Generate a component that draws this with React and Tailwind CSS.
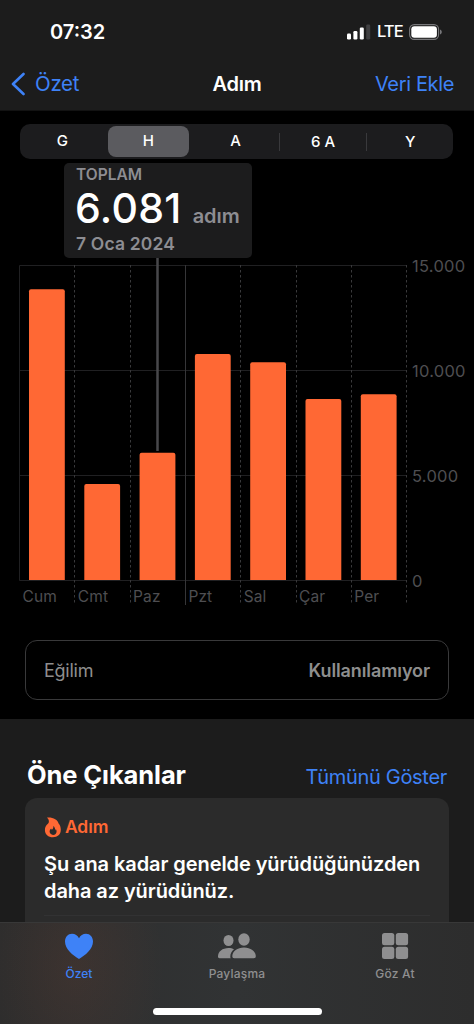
const STEPS = [
  { day: "Cum", value: 13870 },
  { day: "Cmt", value: 4590 },
  { day: "Paz", value: 6081 },
  { day: "Pzt", value: 10780 },
  { day: "Sal", value: 10390 },
  { day: "Çar", value: 8640 },
  { day: "Per", value: 8870 },
];

const TICKS = [
  { value: 0, label: "0" },
  { value: 5000, label: "5.000" },
  { value: 10000, label: "10.000" },
  { value: 15000, label: "15.000" },
];

const LEFT = 19.5;
const STEP = 55.3;
const BASE = 322.5;
const yOf = (value) => BASE - (value / 5000) * 105;

function StatusBar() {
  return (
    <div className="flex h-[58px] items-center justify-between pt-[5px] pr-[32px] pl-[50px]">
      <span className="text-[20px] font-semibold">07:32</span>
      <div className="flex items-center">
        <svg width="24" height="16" viewBox="0 0 24 16" fill="#fff">
          <rect x="0" y="9.5" width="4" height="6" rx="1.2" />
          <rect x="6.4" y="7" width="4" height="8.5" rx="1.2" />
          <rect x="12.8" y="3.5" width="4" height="12" rx="1.2" />
          <rect x="19.2" y="0.5" width="4" height="15" rx="1.2" fill="#404042" />
        </svg>
        <span className="ml-[6px] w-[25px] text-[16.5px] font-medium tracking-[-0.9px]">LTE</span>
        <svg className="ml-[7px]" width="33" height="16" viewBox="0 0 33 16" fill="none">
          <rect x="0.6" y="0.6" width="29" height="14.8" rx="4.6" stroke="#77777a" strokeWidth="1.1" />
          <rect x="2.3" y="2.3" width="25.6" height="11.4" rx="3" fill="#fff" />
          <path d="M31 5.5c1.2.4 1.8 1.4 1.8 2.5s-.6 2.1-1.8 2.5z" fill="#77777a" />
        </svg>
      </div>
    </div>
  );
}

function NavBar() {
  return (
    <div className="grid h-[52px] grid-cols-3 items-center pr-[20px] pl-[11px] text-[20.5px]">
      <a className="flex items-center text-[#3e82f7]">
        <svg width="14" height="24" viewBox="0 0 14 24" fill="none" stroke="currentColor" strokeWidth="2.6" strokeLinecap="round" strokeLinejoin="round">
          <path d="M12.5 2 2 12l10.5 10" />
        </svg>
        <span className="ml-[10px] tracking-[-0.3px]">Özet</span>
      </a>
      <h1 className="pl-[9px] text-center text-[20px] font-semibold tracking-[-0.3px]">Adım</h1>
      <a className="text-right text-[20px] tracking-[-0.35px] whitespace-nowrap text-[#3e82f7]">Veri Ekle</a>
    </div>
  );
}

function RangePicker() {
  return (
    <div className="mr-[21px] ml-5 mt-[13px] grid h-[35px] shrink-0 grid-cols-5 items-center rounded-[10px] bg-[#1c1c1e] text-center text-[15px] font-medium">
      <span className="pr-[2px]">G</span>
      <span className="mr-[4px] ml-[1px] flex h-[31px] items-center justify-center rounded-[8px] bg-[#5b5b5f]">H</span>
      <span className="pr-[2px]">A</span>
      <span className="-ml-px border-l border-[#39393c] leading-[18px]">6 A</span>
      <span className="border-l border-[#39393c] leading-[18px]">Y</span>
    </div>
  );
}

function Selection() {
  return (
    <div className="mt-1 ml-[64px] flex h-[95px] w-[188px] shrink-0 flex-col rounded-[5px] bg-[#1c1c1d] pt-[3px] pl-[12px] text-[#8d8d92]">
      <div className="text-[15.5px] leading-[18px] font-semibold">TOPLAM</div>
      <div className="-mt-px -ml-px flex h-[51px] items-baseline leading-[50px]">
        <span className="text-[41px] font-medium tracking-[0.3px] text-white">6.081</span>
        <span className="ml-[11px] text-[20px] font-semibold">adım</span>
      </div>
      <div className="text-[17.5px] leading-[20px] font-semibold tracking-[0.15px]">7 Oca 2024</div>
    </div>
  );
}

function StepsChart() {
  return (
    <svg className="block shrink-0 overflow-visible" width="474" height="352" viewBox="0 0 474 352">
      {TICKS.map((t) => (
        <g key={t.value}>
          <line x1={LEFT} x2="406.5" y1={yOf(t.value)} y2={yOf(t.value)} stroke="#202022" />
          <text x="412" y={yOf(t.value) + 6} fill="#4e4e51" fontSize="16.5" letterSpacing="0.25">
            {t.label}
          </text>
        </g>
      ))}
      <line x1={LEFT} x2={LEFT} y1="7.5" y2={BASE} stroke="#202022" />
      {STEPS.map((s, i) => {
        const x = LEFT + STEP * (i + 1);
        return (
          <line
            key={s.day}
            x1={Math.floor(x) + 0.5}
            x2={Math.floor(x) + 0.5}
            y1="7"
            y2={i === 2 ? 347 : 345}
            stroke={i === 2 ? "#363638" : "#39393b"}
            strokeDasharray={i === 2 ? undefined : "2.5 2.5"}
          />
        );
      })}
      <line x1="157.5" x2="157.5" y1="0" y2="193" stroke="#48484b" strokeWidth="2.5" />
      {STEPS.map((s, i) => {
        const x = LEFT + STEP * i + 9.5;
        const y = yOf(s.value);
        return (
          <g key={s.day}>
            <path
              d={`M${x} ${BASE - 0.5}V${y + 2}q0-2 2-2h31.8q2 0 2 2V${BASE - 0.5}z`}
              fill="#ff6834"
            />
            <text x={x - 6.5} y="344" fill="#4e4e51" fontSize="15.5" letterSpacing="0.1">
              {s.day}
            </text>
          </g>
        );
      })}
    </svg>
  );
}

function Highlights() {
  return (
    <section className="grow bg-[#1c1c1c] pt-[40px]">
      <div className="flex items-baseline justify-between pr-[27px] pl-[27px]">
        <h2 className="text-[25.5px] leading-[32px] font-bold tracking-[-0.1px]">Öne Çıkanlar</h2>
        <a className="text-[20px] tracking-[-0.3px] text-[#3e82f7]">Tümünü Göster</a>
      </div>
      <div className="mx-[25px] mt-[6px] h-[160px] rounded-[12px] bg-[#2b2b2b] px-[19px] pt-[17px]">
        <div className="flex items-center text-[#ff6834]">
          <svg width="18" height="21" viewBox="0 0 18 21" fill="currentColor" fillRule="evenodd">
            <path d="M3 .5C9 0 13.6 2.500 14.600 6.500c1.500 1.700 2.200 3.800 2.200 6.300 0 4.700-3.300 7.500-7.900 7.500S.9 17.400.9 13c0-2.800 1.100-4.600 3-6.200C5.300 5.600 5.400 2.800 3 .5zM9.300 9c.3 1.800-.4 2.900-1.300 3.800-.5-.3-.8-.7-.9-1.300-1 .9-1.500 2-1.500 3.100 0 1.900 1.500 3.300 3.500 3.300s3.500-1.400 3.500-3.400c0-1-.3-1.800-.9-2.400 0 .6-.2 1-.6 1.300C11.300 11.600 10.700 10 9.300 9z" />
          </svg>
          <span className="ml-[3px] text-[17.5px] leading-[24px] font-semibold tracking-[-0.1px]">Adım</span>
        </div>
        <p className="mt-[12px] text-[20px] leading-[27px] font-semibold tracking-[-0.08px] whitespace-nowrap">
          Şu ana kadar genelde yürüdüğünüzden
          <br />
          daha az yürüdünüz.
        </p>
        <div className="mt-[10px] h-px bg-[#323233]" />
      </div>
    </section>
  );
}

function TabBar() {
  return (
    <nav className="absolute inset-x-0 bottom-0 h-[102px] border-t border-[#383838] bg-linear-to-r from-[#2d2d2d] via-[#313334] to-[#2d2d2d]">
      <div className="absolute inset-0 bg-[radial-gradient(ellipse_90px_130px_at_75px_45px,#ff683412,transparent)]" />
      <div className="relative grid grid-cols-3 pt-[9px] text-center text-[12px] font-medium text-[#8f8f90]">
        <a className="flex flex-col items-center text-[#3e82f7]">
          <svg width="30" height="28" viewBox="0 0 30 28" fill="currentColor">
            <path d="M15 27C9 23.5 1 17 1 9.5 1 5 4 1.7 8 1.7c3.200 0 5.500 1.700 7 4.500 1.500-2.800 3.800-4.500 7-4.500 4 0 7 3.300 7 7.800C29 17 21 23.500 15 27z" />
          </svg>
          <span className="mt-[5px]">Özet</span>
        </a>
        <a className="flex flex-col items-center">
          <svg width="40" height="28" viewBox="0 0 40 28" fill="currentColor">
            <ellipse cx="11.5" cy="8.5" rx="5" ry="5.5" />
            <ellipse cx="27" cy="7.5" rx="5.7" ry="6.2" />
            <path d="M1 24.5C1 19.5 5.500 16 11.500 16c2.200 0 4 .5 5.500 1.300-2.300 1.900-3.600 4.300-3.700 7.200 0 .7.100 1.200.4 1.700H2.600C1.500 26.200 1 25.600 1 24.500zM15.300 24.300C15.300 19.300 20.500 15.500 27 15.500s11.800 3.800 11.800 8.800c0 1.300-.7 2-2 2H17.300c-1.300 0-2-.7-2-2z" />
          </svg>
          <span className="mt-[5px] tracking-[0.2px]">Paylaşma</span>
        </a>
        <a className="flex flex-col items-center">
          <svg width="28" height="28" viewBox="0 0 28 28" fill="currentColor">
            <rect x="1" y="1" width="12.3" height="12.3" rx="2.5" />
            <rect x="14.8" y="1" width="12.3" height="12.3" rx="2.5" />
            <rect x="1" y="14.8" width="12.3" height="12.3" rx="2.5" />
            <rect x="14.8" y="14.8" width="12.3" height="12.3" rx="2.5" />
          </svg>
          <span className="mt-[5px] tracking-[0.2px]">Göz At</span>
        </a>
      </div>
      <div className="absolute bottom-[9px] left-[153px] h-[7px] w-[169px] rounded-full bg-white" />
    </nav>
  );
}

export default function App() {
  return (
    <div className="relative flex h-[1024px] w-[474px] flex-col overflow-hidden bg-black font-[Inter,sans-serif] text-white">
      <header className="h-[111px] shrink-0 border-b border-[#121212] bg-[#1c1c1c]">
        <StatusBar />
        <NavBar />
      </header>
      <RangePicker />
      <Selection />
      <StepsChart />
      <div className="mx-[25px] mt-[30px] mb-[19px] flex h-[60px] shrink-0 items-center justify-between rounded-[12px] border border-[#39393a] px-[18px] text-[18px] text-[#8e8e8e]">
        <span className="tracking-[-0.25px]">Eğilim</span>
        <span className="font-semibold tracking-[-0.1px]">Kullanılamıyor</span>
      </div>
      <Highlights />
      <TabBar />
    </div>
  );
}
